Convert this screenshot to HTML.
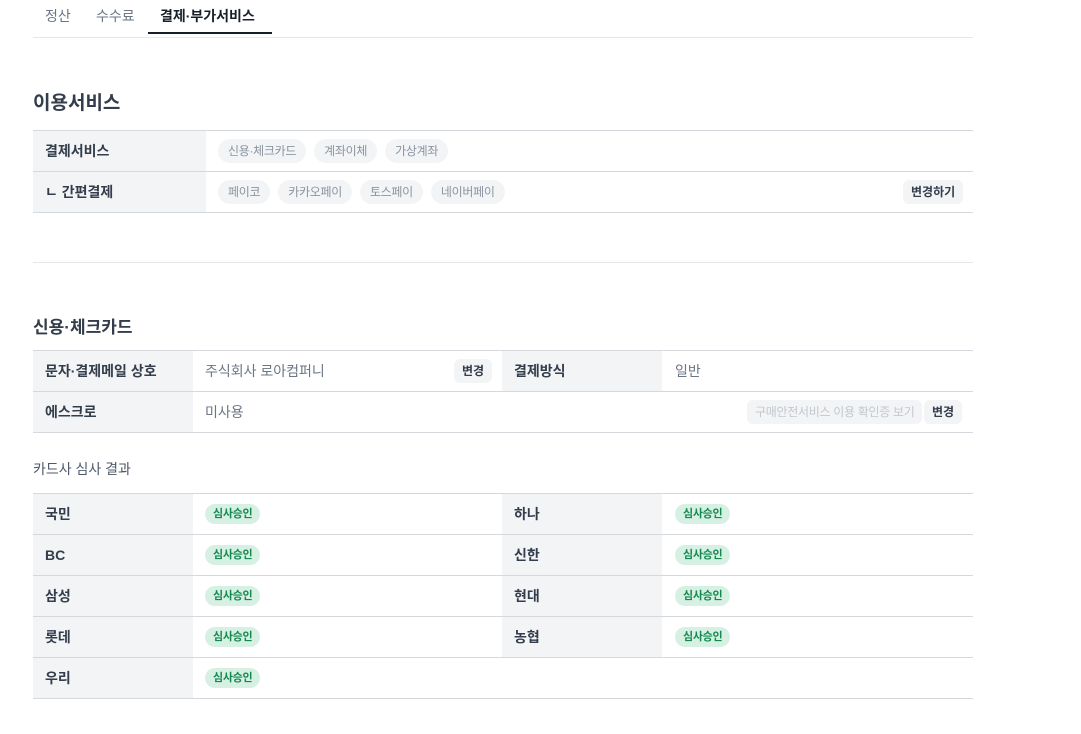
<!DOCTYPE html>
<html><head><meta charset="utf-8"><style>
*{margin:0;padding:0;box-sizing:border-box}
body{width:1081px;height:734px;background:#fff;font-family:"Liberation Sans","Noto Sans CJK KR",sans-serif;color:#333d4b;position:relative;overflow:hidden}
.a{position:absolute}
.tab{position:absolute;top:6px;font-size:14px;color:#6b7684}
.line{position:absolute;left:33px;width:940px;height:1px;background:#d5d9de}
.lab{position:absolute;background:#f2f4f6;font-size:14px;font-weight:bold;color:#333d4b;padding-left:12px;display:flex;align-items:center}
.val{position:absolute;font-size:14px;color:#6b7684;display:flex;align-items:center}
.chip{display:inline-block;height:24px;line-height:24px;border-radius:12px;background:#f2f4f6;color:#8b95a1;font-size:12px;padding:0 10px;margin-right:8px;letter-spacing:-0.3px}
.btn{position:absolute;height:24px;line-height:24px;border-radius:6px;background:#f2f4f6;font-size:12px;font-weight:bold;color:#333d4b;padding:0 8px}
.ok{position:absolute;height:20px;line-height:20px;border-radius:10px;background:#d6f1e3;color:#14894f;font-size:11px;font-weight:bold;padding:0 8px;letter-spacing:-0.3px}
h2{position:absolute;left:33px;font-weight:bold;color:#333d4b}
</style></head><body>
<div class="tab" style="left:45px">정산</div>
<div class="tab" style="left:96px">수수료</div>
<div class="tab" style="left:160px;color:#191f28;font-weight:bold">결제·부가서비스</div>
<div class="a" style="left:148px;top:32px;width:124px;height:2px;background:#191f28"></div>
<div class="line" style="top:37px;background:#e5e8eb"></div>

<h2 style="top:88px;font-size:19px">이용서비스</h2>
<div class="line" style="top:130px"></div>
<div class="lab" style="left:33px;top:131px;width:173px;height:40px">결제서비스</div>
<div class="val" style="left:218px;top:131px;height:40px"><span class="chip">신용·체크카드</span><span class="chip">계좌이체</span><span class="chip">가상계좌</span></div>
<div class="line" style="top:171px"></div>
<div class="lab" style="left:33px;top:172px;width:173px;height:40px">ㄴ 간편결제</div>
<div class="val" style="left:218px;top:172px;height:40px"><span class="chip">페이코</span><span class="chip">카카오페이</span><span class="chip">토스페이</span><span class="chip">네이버페이</span></div>
<div class="btn" style="left:903px;top:180px">변경하기</div>
<div class="line" style="top:212px"></div>
<div class="line" style="top:262px;background:#e5e8eb"></div>

<h2 style="top:313px;font-size:17px">신용·체크카드</h2>
<div class="line" style="top:350px"></div>
<div class="lab" style="left:33px;top:351px;width:160px;height:40px">문자·결제메일 상호</div>
<div class="val" style="left:205px;top:351px;height:40px">주식회사 로아컴퍼니</div>
<div class="btn" style="left:454px;top:359px">변경</div>
<div class="lab" style="left:502px;top:351px;width:160px;height:40px">결제방식</div>
<div class="val" style="left:675px;top:351px;height:40px">일반</div>
<div class="line" style="top:391px"></div>
<div class="lab" style="left:33px;top:392px;width:160px;height:40px">에스크로</div>
<div class="val" style="left:205px;top:392px;height:40px">미사용</div>
<div class="btn" style="left:747px;top:400px;color:#c3c8ce;font-weight:normal;letter-spacing:-0.3px">구매안전서비스 이용 확인증 보기</div>
<div class="btn" style="left:924px;top:400px">변경</div>
<div class="line" style="top:432px"></div>

<div class="a" style="left:33px;top:459px;font-size:14px;color:#4e5968">카드사 심사 결과</div>
<div class="line" style="top:493px"></div>
<div class="lab" style="left:33px;top:494px;width:160px;height:40px">국민</div><div class="ok" style="left:205px;top:504px">심사승인</div>
<div class="lab" style="left:502px;top:494px;width:160px;height:40px">하나</div><div class="ok" style="left:675px;top:504px">심사승인</div>
<div class="line" style="top:534px"></div>
<div class="lab" style="left:33px;top:535px;width:160px;height:40px">BC</div><div class="ok" style="left:205px;top:545px">심사승인</div>
<div class="lab" style="left:502px;top:535px;width:160px;height:40px">신한</div><div class="ok" style="left:675px;top:545px">심사승인</div>
<div class="line" style="top:575px"></div>
<div class="lab" style="left:33px;top:576px;width:160px;height:40px">삼성</div><div class="ok" style="left:205px;top:586px">심사승인</div>
<div class="lab" style="left:502px;top:576px;width:160px;height:40px">현대</div><div class="ok" style="left:675px;top:586px">심사승인</div>
<div class="line" style="top:616px"></div>
<div class="lab" style="left:33px;top:617px;width:160px;height:40px">롯데</div><div class="ok" style="left:205px;top:627px">심사승인</div>
<div class="lab" style="left:502px;top:617px;width:160px;height:40px">농협</div><div class="ok" style="left:675px;top:627px">심사승인</div>
<div class="line" style="top:657px"></div>
<div class="lab" style="left:33px;top:658px;width:160px;height:40px">우리</div><div class="ok" style="left:205px;top:668px">심사승인</div>
<div class="line" style="top:698px"></div>
</body></html>
